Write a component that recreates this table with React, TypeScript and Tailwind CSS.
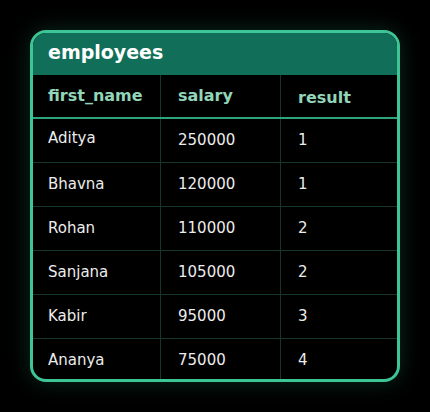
import React from "react";

const rows = [
  ["Aditya", "250000", "1"],
  ["Bhavna", "120000", "1"],
  ["Rohan", "110000", "2"],
  ["Sanjana", "105000", "2"],
  ["Kabir", "95000", "3"],
  ["Ananya", "75000", "4"],
];

export default function App() {
  return (
    <div
      className="w-[430px] h-[412px] bg-black p-[30px]"
      style={{ fontFamily: "'DejaVu Sans', 'Liberation Sans', sans-serif" }}
    >
      <div className="w-[370px] h-[352px] border-[3px] border-[#3ec596] rounded-[16px] overflow-hidden bg-black shadow-[0_0_22px_rgba(52,211,153,0.2)] flex flex-col">
        <div className="h-[42px] shrink-0 bg-[#116f59] flex items-center pl-[15px] pb-[4px]">
          <span className="text-[19px] leading-[22px] font-bold text-white">employees</span>
        </div>
        <div className="h-[42px] shrink-0 flex border-b-2 border-[#2aa57c] box-content">
          <div className="w-[127px] flex items-center pl-[15px] text-[16px] font-bold text-[#92d5b8]">
            first_name
          </div>
          <div className="w-[120px] border-l border-[#16352b] flex items-center pl-[17px] text-[16px] font-bold text-[#92d5b8]">
            salary
          </div>
          <div className="flex-1 border-l border-[#16352b] flex items-center pl-[17px] pt-[3px] text-[16px] font-bold text-[#92d5b8]">
            result
          </div>
        </div>
        {rows.map((r, i) => (
          <div
            key={i}
            className={
              i < rows.length - 1
                ? "h-[44px] shrink-0 flex border-b border-[#16352b] text-[15px] text-[#ececec]"
                : "flex-1 flex text-[15px] text-[#ececec]"
            }
          >
            <div className={i === 0 ? "w-[127px] pl-[15px] pt-[8px]" : "w-[127px] pl-[15px] pt-[9.5px]"}>{r[0]}</div>
            <div className="w-[120px] border-l border-[#16352b] pl-[17px] pt-[9.5px]">{r[1]}</div>
            <div className="flex-1 border-l border-[#16352b] pl-[17px] pt-[9.5px]">{r[2]}</div>
          </div>
        ))}
      </div>
    </div>
  );
}
